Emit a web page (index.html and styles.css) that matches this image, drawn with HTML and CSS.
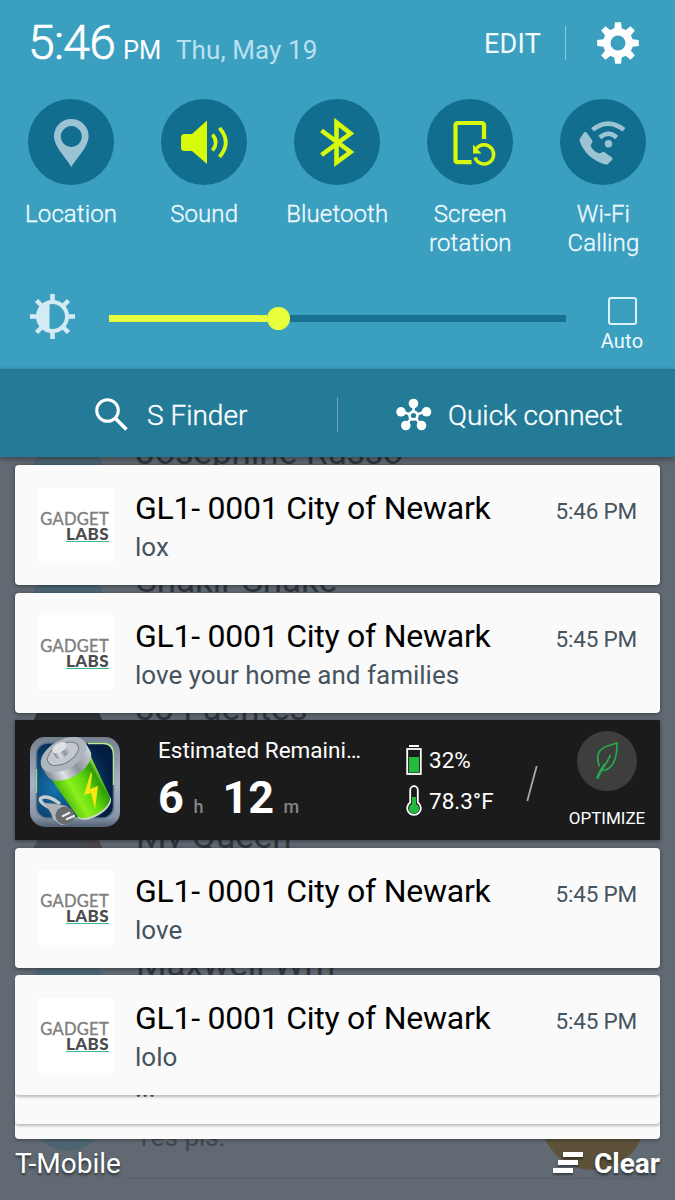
FILE: index.html
```html
<!DOCTYPE html>
<html lang="en">
<head>
    <meta charset="UTF-8">
    <meta name="viewport" content="width=device-width, initial-scale=1.0">
    <title>Notifications</title>
    <link rel="stylesheet" href="styles.css">
</head>
<body>
    <!-- app behind the shade -->
    <div class="contacts">
        <div class="contact">
            <div class="avatar"></div>
            <div><div class="name">Josephine Russo</div></div>
        </div>
        <div class="contact">
            <div class="avatar"></div>
            <div><div class="name">Shakir Shake</div></div>
        </div>
        <div class="contact">
            <div class="avatar photo"></div>
            <div><div class="name">JJ Fuentes</div></div>
        </div>
        <div class="contact">
            <div class="avatar photo-red"></div>
            <div><div class="name">My Queen</div></div>
        </div>
        <div class="contact">
            <div class="avatar"></div>
            <div><div class="name">Maxwell Wm</div></div>
        </div>
        <div class="contact">
            <div class="avatar"></div>
            <div><div class="name">&nbsp;</div><div class="preview">Yes pls.</div></div>
            <div class="fab"></div>
        </div>
    </div>

    <div class="shade">
        <div class="panel">
            <div class="status">
                <span class="clock">5:46</span>
                <span class="ampm">PM</span>
                <span class="date">Thu, May 19</span>
                <span class="edit">EDIT</span>
                <span class="status-line"></span>
                <svg class="gear" viewBox="-21 -21 42 42">
                    <g fill="#fff">
                        <circle r="15"/>
                        <g id="teeth">
                            <path d="M-4 -12 L-3 -20.8 H3 L4 -12 Z"/>
                            <path d="M-4 12 L-3 20.8 H3 L4 12 Z"/>
                            <path d="M-12 -4 L-20.8 -3 V3 L-12 4 Z"/>
                            <path d="M12 -4 L20.8 -3 V3 L12 4 Z"/>
                        </g>
                        <use href="#teeth" transform="rotate(45)"/>
                    </g>
                    <circle r="7.5" fill="#3b9fc0"/>
                </svg>
            </div>

            <div class="toggles">
                <div class="toggle">
                    <div class="round">
                        <svg viewBox="0 0 86 86">
                            <path fill="#9cc3d3" fill-rule="evenodd" d="M43.3 68 C40 61 26 48 26 37.2 A17.3 17.3 0 0 1 60.6 37.2 C60.6 48 47 61 43.3 68 Z M43.3 27 a10.5 10.5 0 1 0 .01 0 Z"/>
                        </svg>
                    </div>
                    Location
                </div>
                <div class="toggle">
                    <div class="round">
                        <svg viewBox="0 0 86 86">
                            <path fill="#d7f90a" d="M23.5 35 h7.5 L46 21.5 V65 L31 52 H23.5 Q20 52 20 48.5 V38.5 Q20 35 23.5 35 Z"/>
                            <path class="on" stroke-width="3.8" d="M51.5 35.5 Q58 43.5 51.5 51.5 M58.5 29 Q71 43.5 58.5 58"/>
                        </svg>
                    </div>
                    Sound
                </div>
                <div class="toggle">
                    <div class="round">
                        <svg viewBox="0 0 86 86">
                            <path class="on" stroke-width="4.6" d="M27.5 31.5 L56.5 53 L42.5 63.5 V23.5 L56.5 34.5 L27.5 56"/>
                        </svg>
                    </div>
                    Bluetooth
                </div>
                <div class="toggle">
                    <div class="round">
                        <svg viewBox="0 0 86 86">
                            <path class="on" stroke-width="4.2" d="M44.5 63.2 H31 Q28.5 63.2 28.5 61 V26.5 Q28.5 24 31 24 H54.5 Q57 24 57 26.5 V40"/>
                            <path class="on" stroke-width="3.4" d="M49.5 49.5 A9.6 9.6 0 1 1 48 58.5"/>
                            <path fill="#d7f90a" d="M46 45.5 V54.5 H54.5 Z"/>
                        </svg>
                    </div>
                    Screen<br>rotation
                </div>
                <div class="toggle">
                    <div class="round">
                        <svg viewBox="0 0 86 86">
                            <path fill="#9cc3d3" d="M20 39.5 L24 33.5 Q25.5 32.5 27 34 L32 41 Q33 42.5 32 44 L30.5 46.5 Q33 52.5 39.5 54.5 L42.5 53 Q44 52.5 45 53.5 L52 58.5 Q53 59.5 52 61 L48 65 Q46.5 66 44.5 65.3 Q26 59 20 43 Q19 41 20 39.5 Z"/>
                            <circle cx="48.5" cy="44.8" r="3.7" fill="#9cc3d3"/>
                            <path fill="none" stroke="#9cc3d3" stroke-width="4.5" d="M32.5 30.8 Q48 18.5 64 30.8 M39.8 38.5 Q48.5 31 56.8 38.5"/>
                        </svg>
                    </div>
                    Wi-Fi<br>Calling
                </div>
            </div>

            <div class="brightness">
                <svg class="sun" viewBox="-22.5 -22.5 45 45">
                    <circle r="14.5" fill="none" stroke="#d3ebf3" stroke-width="4"/>
                    <path fill="#d3ebf3" d="M-3 -14 V14 A14.5 14.5 0 0 1 -3 -14 Z"/>
                    <path stroke="#d3ebf3" stroke-width="4.5" d="M0 -22.5 V-15 M0 22.5 V15 M-22.5 0 H-15 M22.5 0 H15 M-16 -16 L-10.5 -10.5 M16 16 L10.5 10.5 M-16 16 L-10.5 10.5 M16 -16 L10.5 -10.5"/>
                </svg>
                <div class="slider">
                    <div class="filled"></div>
                    <div class="knob"></div>
                    <div class="rest"></div>
                </div>
                <div class="auto">
                    <div class="box"></div>
                    Auto
                </div>
            </div>
        </div>

        <div class="tools">
            <div class="tool finder">
                <svg width="34" height="34" viewBox="0 0 34 34" fill="none" stroke="#fff">
                    <circle cx="12.5" cy="12.5" r="10.8" stroke-width="3"/>
                    <path stroke-width="3.6" d="M20 20 L31.5 31.5"/>
                </svg>
                <span>S Finder</span>
            </div>
            <div class="tools-line"></div>
            <div class="tool connect">
                <svg width="36" height="34" viewBox="0 0 36 34">
                    <path fill="none" stroke="#fff" stroke-width="2.5" d="M17.5 5 V17 M5 13.5 L17.5 17.5 L30 13.5 M9.5 27.5 L17.5 17.5 L25.5 27.5"/>
                    <g fill="#fff">
                        <circle cx="17.5" cy="5.5" r="4.8"/>
                        <circle cx="5" cy="13.8" r="4.8"/>
                        <circle cx="30.5" cy="13.8" r="4.8"/>
                        <circle cx="9.8" cy="27.5" r="4.8"/>
                        <circle cx="25.5" cy="27.5" r="4.8"/>
                        <circle cx="17.5" cy="17.5" r="5.3"/>
                    </g>
                    <circle cx="17.5" cy="17.5" r="2.6" fill="#247b97"/>
                </svg>
                <span>Quick connect</span>
            </div>
        </div>

        <div class="notifications">
            <div class="card">
                <div class="logo"><div class="gadget">GADGET</div><div class="labs">LABS</div></div>
                <div class="body">
                    <div class="title">GL1- 0001 City of Newark</div>
                    <div class="text">lox</div>
                </div>
                <div class="time">5:46 PM</div>
            </div>

            <div class="card">
                <div class="logo"><div class="gadget">GADGET</div><div class="labs">LABS</div></div>
                <div class="body">
                    <div class="title">GL1- 0001 City of Newark</div>
                    <div class="text">love your home and families</div>
                </div>
                <div class="time">5:45 PM</div>
            </div>

            <div class="battery">
                <svg class="battery-icon" viewBox="0 0 90 90">
                    <defs>
                        <linearGradient id="frame" x1="0" y1="0" x2="0" y2="1">
                            <stop offset="0" stop-color="#76818f"/>
                            <stop offset=".5" stop-color="#a6b3c2"/>
                            <stop offset=".88" stop-color="#8797a9"/>
                            <stop offset="1" stop-color="#536274"/>
                        </linearGradient>
                        <radialGradient id="blue" cx=".25" cy=".6" r=".75">
                            <stop offset="0" stop-color="#1473ad"/>
                            <stop offset="1" stop-color="#031d42"/>
                        </radialGradient>
                        <linearGradient id="green" x1="0" y1="0" x2="1" y2="0">
                            <stop offset="0" stop-color="#49b70c"/>
                            <stop offset=".3" stop-color="#8cf01c"/>
                            <stop offset=".6" stop-color="#5fd70b"/>
                            <stop offset=".88" stop-color="#2f9c06"/>
                            <stop offset="1" stop-color="#a6ee4c"/>
                        </linearGradient>
                        <linearGradient id="metal" x1="0" y1="0" x2="1" y2="0">
                            <stop offset="0" stop-color="#7e868e"/>
                            <stop offset=".3" stop-color="#dfe3e6"/>
                            <stop offset=".6" stop-color="#8b939b"/>
                            <stop offset="1" stop-color="#cdd2d6"/>
                        </linearGradient>
                    </defs>
                    <rect width="90" height="90" rx="15" fill="url(#frame)"/>
                    <rect x="6.5" y="6" width="77" height="75" rx="11" fill="url(#blue)" stroke="#5d7086" stroke-width="1.5"/>
                    <path d="M58 6.5 H74 Q83.5 7 83.5 18 V48" fill="none" stroke="#b7f08b" stroke-width="1.3"/>
                    <path d="M6.5 32 V56 M42 81 H55" stroke="#9bdc7e" stroke-width="1.2"/>
                    <g transform="translate(34 18.5) rotate(-30)">
                        <path d="M-23 12 L-19 59 A19 9 0 0 0 19 59 L23 12 Z" fill="url(#green)"/>
                        <path d="M-19 58 A19 9 0 0 0 19 58 V60 A19 9 0 0 1 -19 60 Z" fill="#cbd8c6"/>
                        <path d="M-25 -1 V9 A25 14 0 0 0 25 9 V-1 Z" fill="url(#metal)"/>
                        <ellipse cy="-1" rx="25" ry="14.5" fill="#aeb5bc"/>
                        <ellipse cy="-2" rx="17" ry="9.5" fill="#c3c9ce" stroke="#757d86"/>
                        <path d="M-8 -9 V-3 A8 4.5 0 0 0 8 -3 V-9 Z" fill="url(#metal)"/>
                        <ellipse cy="-9" rx="8" ry="4.5" fill="#dde1e4"/>
                    </g>
                    <path d="M61 35 L54 58 L61 56 L65 72 L68 49 L60 52 L62 37 Z" fill="#f9e414"/>
                    <path d="M32 75 C16 71 4 62 14 60 Q21 59 30 67" fill="none" stroke="#c9cdd0" stroke-width="3.5"/>
                    <path d="M13 66 Q24 66 37 69 L43 77 Q42 88 31 88 L23 82 Q20 72 13 66 Z" fill="#aeb2b5"/>
                    <ellipse cx="35" cy="78.5" rx="9.5" ry="9" fill="#686b6e"/>
                    <path d="M32 79.5 L40 75.5 M36 82.5 L45 78.5" stroke="#e7e9ea" stroke-width="2"/>
                </svg>
                <div class="remaining">
                    <div class="estimated">Estimated Remaini…</div>
                    <div class="duration"><b>6</b><i>h</i><b class="minutes">12</b><i>m</i></div>
                </div>
                <div class="stats">
                    <div class="stat">
                        <svg width="16" height="32" viewBox="0 0 16 32">
                            <rect x="3" y="1" width="10" height="2" fill="#fff"/>
                            <rect x="1.2" y="5" width="13.6" height="25" fill="none" stroke="#fff" stroke-width="1.8"/>
                            <rect x="3" y="13" width="10" height="15.5" fill="#23bb3b"/>
                        </svg>
                        <span>32%</span>
                    </div>
                    <div class="stat">
                        <svg width="16" height="32" viewBox="0 0 16 32">
                            <path fill="none" stroke="#fff" stroke-width="1.8" d="M4.2 17.5 V5 a3.8 3.8 0 0 1 7.6 0 V17.5 a6.8 6.8 0 1 1 -7.6 0 Z"/>
                            <path fill="#23bb3b" d="M6 12 H10 V19 A5 5 0 1 1 6 19 Z"/>
                        </svg>
                        <span>78.3°F</span>
                    </div>
                </div>
                <svg class="slash" width="12" height="37" viewBox="0 0 12 37">
                    <path d="M1.3 36 L10.7 1" stroke="#aaa" stroke-width="1.8"/>
                </svg>
                <div class="optimize">
                    <div class="leaf">
                        <svg viewBox="0 0 60 60" fill="none" stroke="#27a84b" stroke-width="1.7">
                            <path d="M20.5 48 Q22 42 30 31 L33.5 24"/>
                            <path d="M22.5 35.5 Q17 21 28 16 L40 12 Q40 28 35 34 Q31 39.5 25 39.5"/>
                            <path d="M20 47.5 Q23 40 28 33" stroke-width="2.5"/>
                        </svg>
                    </div>
                    OPTIMIZE
                </div>
            </div>

            <div class="card">
                <div class="logo"><div class="gadget">GADGET</div><div class="labs">LABS</div></div>
                <div class="body">
                    <div class="title">GL1- 0001 City of Newark</div>
                    <div class="text">love</div>
                </div>
                <div class="time">5:45 PM</div>
            </div>

            <div class="card last">
                <div class="logo"><div class="gadget">GADGET</div><div class="labs">LABS</div></div>
                <div class="body">
                    <div class="title">GL1- 0001 City of Newark</div>
                    <div class="text">lolo</div>
                </div>
                <div class="time">5:45 PM</div>
            </div>
            <div class="stacked first">...</div>
            <div class="stacked second"></div>
        </div>

        <div class="footer">
            <span class="carrier">T-Mobile</span>
            <svg width="32" height="24" viewBox="0 0 32 24" fill="#fff">
                <rect x="11" y="1" width="20" height="5"/>
                <rect x="6" y="9" width="20" height="5"/>
                <rect x="1" y="17" width="20" height="5"/>
            </svg>
            <span class="clear">Clear</span>
        </div>
    </div>
</body>
</html>
```
FILE: styles.css
```css
body{
    margin: 0;
    width: 675px;
    height: 1200px;
    position: relative;
    overflow: hidden;
    background-color: #616a73;
    font-family: Roboto, "Liberation Sans", sans-serif;
}
svg{
    display: block;
    flex: none;
}

/* app behind the shade */
.contacts{
    position: absolute;
    top: 411px;
    left: 0;
    width: 675px;
}
.contact{
    box-sizing: border-box;
    position: relative;
    display: flex;
    height: 128px;
    padding: 28px 0 0 32px;
}
.contact:last-child::after{
    content: "";
    position: absolute;
    left: 125px;
    right: 20px;
    bottom: 0;
    border-bottom: 1px solid #566069;
}
.avatar{
    width: 72px;
    height: 72px;
    margin-right: 32px;
    border-radius: 50%;
    background-color: #4c6472;
}
.avatar.photo{
    background-color: #2f353a;
}
.avatar.photo-red{
    background: linear-gradient(90deg, #484e55 60%, #4f4348);
}
.name{
    font-size: 35px;
    line-height: 42px;
    margin-top: -7px;
    color: #30373d;
    white-space: nowrap;
}
.preview{
    font-size: 26px;
    line-height: 32px;
    margin-top: 7px;
    color: #40484f;
}
.fab{
    position: absolute;
    left: 541px;
    top: 15px;
    width: 104px;
    height: 104px;
    border-radius: 50%;
    background-color: #5d5139;
}

.shade{
    position: relative;
}
.panel{
    height: 369px;
    background-color: #3b9fc0;
    color: #f0fafd;
    overflow: hidden;
}
.status{
    display: flex;
    align-items: baseline;
    height: 86px;
    padding-left: 28px;
    box-sizing: border-box;
    padding-top: 15px;
    white-space: nowrap;
}
.clock{
    width: 95px;
    font-size: 48px;
    line-height: 56px;
    font-weight: 300;
    color: #fff;
    letter-spacing: -.7px;
    -webkit-text-stroke: .7px #fff;
}
.ampm{
    width: 53px;
    font-size: 25.5px;
    color: #fff;
}
.date{
    width: 308px;
    font-size: 26px;
    letter-spacing: .1px;
    color: #b9e0ee;
}
.edit{
    width: 81px;
    font-size: 27px;
    letter-spacing: .2px;
    position: relative;
    top: -6px;
}
.status-line{
    align-self: flex-start;
    width: 1px;
    height: 34px;
    margin-top: 11px;
    margin-right: 31px;
    background-color: #8fc9de;
}
.gear{
    align-self: flex-start;
    width: 42px;
    height: 42px;
    margin-top: 7px;
}
.toggles{
    display: flex;
    padding: 13px 0 0 4.5px;
}
.toggle{
    width: 133.1px;
    text-align: center;
    font-size: 24px;
    line-height: 28.5px;
    font-weight: 300;
    letter-spacing: .1px;
    -webkit-text-stroke: .35px #f0fafd;
}
.round{
    width: 86px;
    height: 86px;
    margin: 0 auto 15px;
    border-radius: 50%;
    background-color: #126e8e;
}
.on{
    fill: none;
    stroke: #d7f90a;
}
.brightness{
    display: flex;
    margin-top: 37px;
    padding-left: 30px;
}
.sun{
    width: 45px;
    height: 45px;
}
.slider{
    display: flex;
    align-items: center;
    width: 457px;
    height: 23px;
    margin: 13px 0 0 34px;
}
.filled{
    width: 158px;
    height: 7px;
    background-color: #e8ff3c;
}
.knob{
    width: 23px;
    height: 23px;
    border-radius: 50%;
    background-color: #e8ff3c;
}
.rest{
    flex: 1;
    height: 7px;
    background-color: #187190;
}
.auto{
    width: 60px;
    margin: 3px 0 0 26px;
    text-align: center;
    font-size: 20px;
    line-height: 24px;
    letter-spacing: .2px;
}
.box{
    box-sizing: border-box;
    width: 29px;
    height: 28px;
    margin: 0 auto 4px;
    border: 2px solid #d9f1f8;
    border-radius: 3px;
}

.tools{
    display: flex;
    align-items: center;
    height: 88px;
    padding-top: 2px;
    position: relative;
    background-color: #247b97;
    border-top: 1px solid #22748f;
    box-sizing: border-box;
    box-shadow: 0 2px 6px rgba(0, 0, 0, .4);
    color: #fff;
    font-size: 28px;
    font-weight: 300;
    -webkit-text-stroke: .35px #fff;
    white-space: nowrap;
}
.tool{
    display: flex;
    align-items: center;
}
.tool span{
    padding-top: 2px;
}
.finder{
    width: 242px;
    padding-left: 95px;
    gap: 18px;
}
.tools-line{
    width: 1px;
    height: 35px;
    margin-right: 58px;
    background-color: #6aa6b9;
}
.connect{
    gap: 16px;
}

.notifications{
    padding: 8px 15px 0;
    height: 674px;
}
.card{
    display: flex;
    align-items: flex-start;
    height: 120px;
    margin-bottom: 7.5px;
    padding: 0 23px 0 22.5px;
    box-sizing: border-box;
    border-radius: 4px;
    background-color: #fafafa;
    box-shadow: 0 1px 4px rgba(0, 0, 0, .45);
    white-space: nowrap;
}
.logo{
    display: flex;
    flex-direction: column;
    align-items: flex-end;
    box-sizing: border-box;
    width: 75px;
    height: 75px;
    margin: 22.5px 22.5px 0 0;
    padding: 24px 3.5px 0 0;
    background-color: #fff;
    font-family: Lato, sans-serif;
}
.gadget{
    font-size: 16.5px;
    line-height: 14px;
    letter-spacing: .3px;
    color: #808080;
    -webkit-text-stroke: .4px #808080;
}
.labs{
    border-bottom: 1.5px solid #3fb98a;
    font-size: 17px;
    line-height: 15px;
    letter-spacing: .4px;
    font-weight: 900;
    color: #4b4b4d;
}
.body{
    flex: 1;
    padding-top: 23px;
}
.title{
    font-size: 32px;
    line-height: 40px;
    letter-spacing: -.25px;
    color: #000;
}
.text{
    margin-top: 4px;
    font-size: 26px;
    line-height: 30px;
    color: #45545f;
}
.time{
    padding-top: 31px;
    font-size: 22.5px;
    line-height: 30px;
    letter-spacing: -.2px;
    color: #45545f;
}
.last{
    position: relative;
    z-index: 3;
    margin-bottom: 0;
    box-shadow: 0 2px 3px rgba(0, 0, 0, .25);
}
/* these slide under the card above */
.stacked{
    position: relative;
    box-sizing: border-box;
    border-radius: 0 0 4px 4px;
    background-color: #fafafa;
    box-shadow: 0 2px 3px rgba(0, 0, 0, .25);
}
.stacked.first{
    z-index: 2;
    height: 49px;
    margin-top: -20px;
    padding-left: 120px;
    font-size: 26px;
    line-height: 26px;
    color: #45545f;
}
.stacked.second{
    z-index: 1;
    height: 24.5px;
    margin-top: -10px;
}

.battery{
    display: flex;
    height: 120px;
    margin-bottom: 7.5px;
    background-color: #1b1b1b;
    box-shadow: 0 1px 4px rgba(0, 0, 0, .45);
    color: #fff;
    white-space: nowrap;
}
.battery-icon{
    width: 90px;
    height: 90px;
    margin: 17px 0 0 15px;
}
.remaining{
    width: 264px;
    padding-left: 38px;
    box-sizing: border-box;
}
.estimated{
    margin-top: 15px;
    font-size: 22.5px;
    line-height: 30px;
}
.duration{
    display: flex;
    align-items: baseline;
    margin-top: 8px;
    font-size: 45px;
    line-height: 50px;
}
.duration b{
    width: 35.5px;
}
.duration .minutes{
    width: 61px;
}
.duration i{
    width: 29px;
    font-size: 18px;
    font-style: normal;
    font-weight: 500;
    color: #858585;
}
.stats{
    width: 107px;
    padding: 23px 0 0 22px;
    box-sizing: border-box;
    font-size: 22.5px;
}
.stat{
    display: flex;
    align-items: center;
    gap: 7px;
    height: 34px;
    margin-bottom: 7px;
}
.slash{
    margin: 45px 0 0 35px;
}
.optimize{
    width: 84px;
    margin-left: 27px;
    text-align: center;
    font-size: 17px;
    line-height: 20px;
}
.leaf{
    width: 60px;
    height: 60px;
    margin: 11px auto 17px;
    border-radius: 50%;
    background-color: #3e3e3e;
}

.footer{
    display: flex;
    align-items: center;
    height: 48px;
    padding: 0 15px;
    color: #fff;
    font-size: 28px;
    text-shadow: 0 2px 3px rgba(0, 0, 0, .6);
}
.carrier{
    flex: 1;
}
.clear{
    margin-left: 10px;
    font-weight: 700;
}
.footer svg{
    filter: drop-shadow(0 2px 1px rgba(0, 0, 0, .4));
}
```
